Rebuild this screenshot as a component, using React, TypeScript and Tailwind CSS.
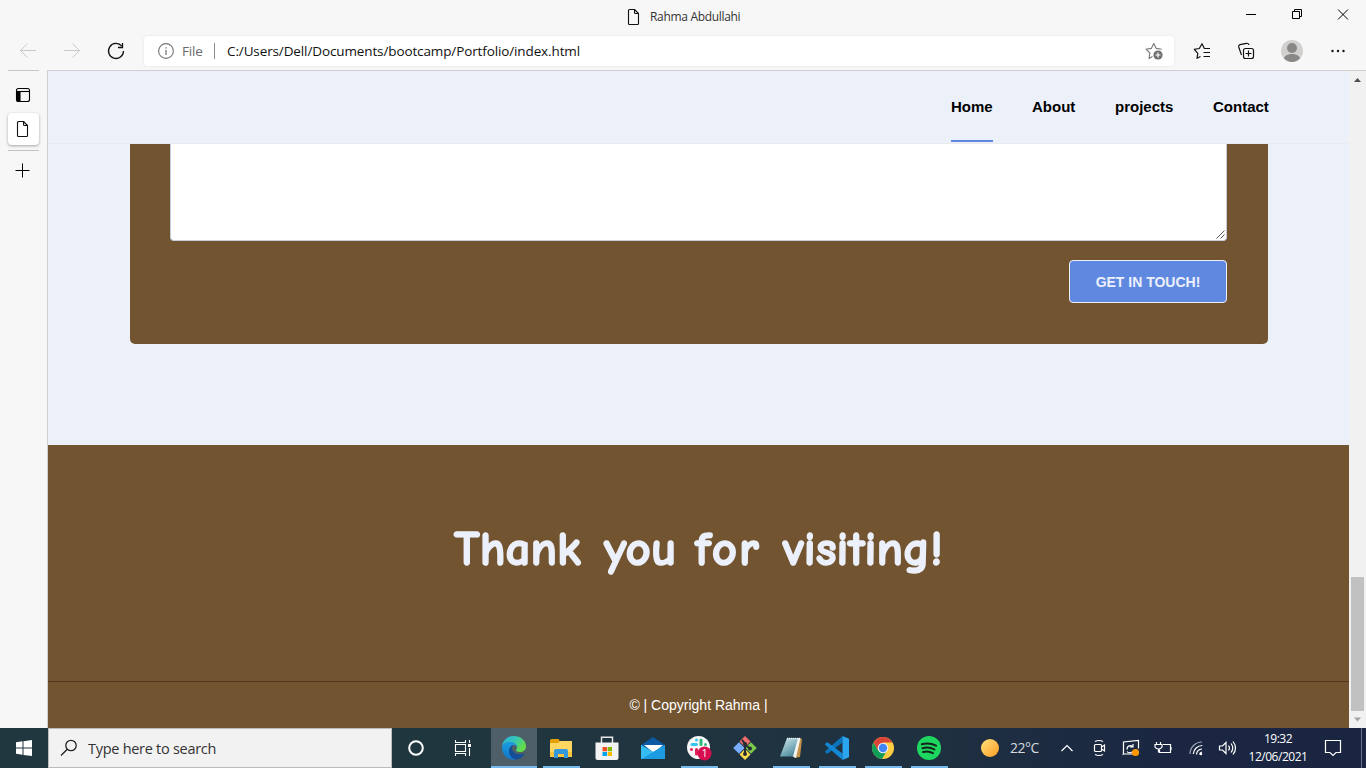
import React from "react";

const UI = "font-['Segoe_UI','Open_Sans',sans-serif]";

function FileIcon() {
  return (
    <svg width="14" height="18" viewBox="0 0 14 18" fill="none" stroke="#111" strokeWidth="1.1" strokeLinejoin="round">
      <path d="M2.5 1.5h5l4 4v10a1 1 0 0 1-1 1h-8a1 1 0 0 1-1-1v-13a1 1 0 0 1 1-1z" />
      <path d="M7.5 1.5v3a1 1 0 0 0 1 1h3" />
    </svg>
  );
}

function TitleBar() {
  return (
    <div className="flex h-[33px] items-center">
      <div className="w-[627px]" />
      <FileIcon />
      <span className={`${UI} ml-[9px] w-[94px] whitespace-nowrap text-[12px] tracking-[-0.320px] text-[#333]`}>Rahma Abdullahi</span>
      <div className="flex-1" />
      <svg width="122" height="33" viewBox="0 0 122 33" fill="none" stroke="#000" strokeWidth="1">
        <path d="M2 14.5h10" />
        <path d="M48.500 11.500h7v7h-7zM50.500 11.500v-2h7v7h-2" />
        <path d="M94 9.500l10 10M104 9.500l-10 10" />
      </svg>
    </div>
  );
}

function Toolbar() {
  return (
    <div className="flex h-[37px] items-start">
      <svg width="144" height="37" viewBox="0 0 144 37" fill="none" strokeWidth="1">
        <path d="M36 17.500H20.500M27.500 10.500l-7 7 7 7M64 17.500h15.500M72.500 10.500l7 7-7 7" stroke="#c9c9c9" />
        <path d="M121.800 13.200a7.500 7.500 0 1 0 1.700 4.800" stroke="#111" strokeWidth="1.300" />
        <path d="M118 14.500h4.500V10" stroke="#111" strokeWidth="1.300" />
      </svg>
      <div className={`${UI} mt-[3px] flex h-[30px] w-[1030px] items-center rounded-[4px] bg-white pl-[14px] text-[13px] shadow-[0_0_3px_rgba(0,0,0,0.08)]`}>
        <svg width="16" height="16" viewBox="0 0 16 16" fill="none" stroke="#777" strokeWidth="1.100">
          <circle cx="8" cy="8" r="7.400" />
          <path d="M8 7v5M8 4.200v1.400" strokeWidth="1.300" />
        </svg>
        <span className="ml-2 w-[24px] text-[13.500px] tracking-[-0.150px] text-[#6b6b6b]">File</span>
        <div className="ml-2 h-4 w-px bg-[#8a8a8a]" />
        <span className="ml-3 whitespace-nowrap text-[13.500px] tracking-[-0.120px] text-[#111]">C:/Users/Dell/Documents/bootcamp/Portfolio/index.html</span>
        <svg className="ml-auto mr-[10px]" width="20" height="20" viewBox="0 0 20 20" fill="none" stroke="#777" strokeWidth="1.100">
          <path d="M8.500 15.500L5 17.500l.9-5.500L2 8.200l5.300-.8L9.800 2.500l2.500 4.900 5.300.8" strokeLinejoin="round" />
          <circle cx="14" cy="14" r="4.600" fill="#6f6f6f" stroke="none" />
          <path d="M14 11.500v5M11.500 14h5" stroke="#fff" strokeWidth="1.200" />
        </svg>
      </div>
      <svg width="192" height="37" viewBox="1174 33 192 37" fill="none" stroke="#111" strokeWidth="1.200">
        <path d="M1200.500 56.500l-3.500 1.800.8-5-3.500-4 5-.8 2.700-4.700 2.400 4.700h5.600M1203.500 52.500h6.500M1203.500 56.500h6.500" strokeLinejoin="round" />
        <path d="M1241.500 55l-2.800-8a2 2 0 0 1 1.300-2.400l6.500-1.300a2 2 0 0 1 2.400 1.700" />
        <rect x="1243.500" y="48.500" width="10" height="10" rx="2" />
        <path d="M1248.500 50.500v6M1245.500 53.500h6" />
        <circle cx="1292" cy="51" r="11" fill="#d2d0ce" stroke="none" />
        <circle cx="1292" cy="48" r="5" fill="#8a8886" stroke="none" />
        <path d="M1284 58.500c1-6 15-6 16 0a11 11 0 0 1-16 0z" fill="#8a8886" stroke="none" />
        <g fill="#111" stroke="none">
          <circle cx="1332.500" cy="51" r="1.200" />
          <circle cx="1338" cy="51" r="1.200" />
          <circle cx="1343.500" cy="51" r="1.200" />
        </g>
      </svg>
    </div>
  );
}

function Sidebar() {
  return (
    <div className="flex w-[47px] flex-col items-center bg-[#f7f7f7]">
      <div className="h-px w-[31px] bg-[#c6c6c6]" />
      <svg className="mt-[16px] mr-[1px]" width="16" height="16" viewBox="0 0 16 16" fill="none" stroke="#000" strokeWidth="1.100">
        <rect x="1.500" y="1.500" width="13" height="13" rx="2" />
        <path d="M2 4.500h12" />
        <path d="M2 4.500h3v9.500H3a1 1 0 0 1-1-1z" fill="#000" />
      </svg>
      <div className="mt-[10px] flex h-8 w-[31px] items-center justify-center rounded-[4px] bg-white pr-px shadow-[0_1px_3px_rgba(0,0,0,0.35)]">
        <FileIcon />
      </div>
      <div className="mt-[5px] h-px w-[31px] bg-[#c2c2c2]" />
      <svg className="mt-[12px] mr-[2px]" width="15" height="15" viewBox="0 0 15 15" stroke="#000" strokeWidth="1">
        <path d="M7.500 0.500v14M0.500 7.500h14" />
      </svg>
    </div>
  );
}

function Nav() {
  return (
    <nav className="flex h-[73px] shrink-0 border-b border-[#e9ebee] pl-[903px] font-['Liberation_Sans',sans-serif] text-[15px] leading-[71px] font-bold text-black">
      <a className="h-[71px] w-[42px] whitespace-nowrap border-b-2 border-[#5f89e0]">Home</a>
      <a className="ml-[39px] w-[44px] whitespace-nowrap">About</a>
      <a className="ml-[39px] w-[58px] whitespace-nowrap">projects</a>
      <a className="ml-[40px] whitespace-nowrap">Contact</a>
    </nav>
  );
}

function Page() {
  return (
    <main className="flex w-[1301px] flex-col bg-[#ecf0f9]">
      <Nav />
      <section className="ml-[82px] h-[200px] w-[1138px] shrink-0 rounded-b-[5px] bg-[#725430] px-[40px]">
        <div className="flex h-[97px] w-[1057px] items-end justify-end rounded-b-[4px] border border-t-0 border-[#c3ccd8] bg-white">
          <svg width="11" height="11" viewBox="0 0 11 11" stroke="#444" strokeWidth="0.900">
            <path d="M1.500 9.500l8-8M5.500 9.500l4-4" />
          </svg>
        </div>
        <div className="mt-[19px] flex w-[1057px] justify-end">
          <button className="h-[43px] w-[158px] whitespace-nowrap rounded-[4px] border border-[#ecf0fa] bg-[#5f89e0] pt-[2px] font-['Liberation_Sans',sans-serif] text-[14px] font-bold text-[#ecf0fa]">GET IN TOUCH!</button>
        </div>
      </section>
      <footer className="mt-[101px] flex flex-1 flex-col bg-[#725430]">
        <h1 className="flex h-[236px] items-center pl-[406px] pb-[27px] font-['Comic_Sans_MS','Comic_Neue','Open_Sans',sans-serif] text-[49px] font-bold text-[#ecf0fa] [-webkit-text-stroke:1.500px_#ecf0fa] [stroke-linejoin:round]">
          <span className="w-[150px] whitespace-nowrap">Thank </span>
          <span className="w-[91px] whitespace-nowrap">you </span>
          <span className="w-[88px] whitespace-nowrap tracking-[2px]">for </span>
          <span className="whitespace-nowrap">visiting!</span>
        </h1>
        <p className="flex-1 border-t border-[#513a1e] text-center font-['Liberation_Sans',sans-serif] text-[14px] leading-[46px] text-white">© | Copyright Rahma |</p>
      </footer>
    </main>
  );
}

function Scrollbar() {
  return (
    <div className="flex w-[17px] flex-col items-center bg-[#f1f1f1]">
      <svg width="17" height="17" viewBox="0 0 17 17"><path d="M5 11h7L8.500 7z" fill="#505050" /></svg>
      <div className="mt-[489px] h-[134px] w-[13px] bg-[#c1c1c1]" />
      <svg width="17" height="17" viewBox="0 0 17 17"><path d="M5 6.500h7L8.500 10.500z" fill="#a3a3a3" /></svg>
    </div>
  );
}

function Cell({ children, open, active }: { children: React.ReactNode; open?: boolean; active?: boolean }) {
  return (
    <div className={`flex h-10 w-[46px] flex-col items-center ${active ? "bg-[#4e5f67]" : ""}`}>
      <div className={`flex h-[38px] items-center pt-[2px] ${active ? "" : "pl-[2px]"}`}>{children}</div>
      {open && <div className={`h-[2px] bg-[#76b9ed] ${active ? "w-[46px]" : "ml-[2px] w-[37px]"}`} />}
    </div>
  );
}

function Edge() {
  return (
    <svg width="24" height="24" viewBox="0 0 24 24">
      <defs>
        <linearGradient id="eg" x1="0" y1="0" x2="1" y2="0.500"><stop stopColor="#2aaee8" /><stop offset=".55" stopColor="#35c7b2" /><stop offset="1" stopColor="#66dc45" /></linearGradient>
        <linearGradient id="eb" x1="0" y1="0" x2="0" y2="1"><stop stopColor="#1b9de2" /><stop offset="1" stopColor="#1274cb" /></linearGradient>
      </defs>
      <path d="M0 11C.5 4 6 0 12 0c7 0 12 5 12 10 0 4-3 6-6 6s-4-1-4-2c0-.700 1-1 1-2.500C15 9 12 6 8 6 4 6 1 8 0 11z" fill="url(#eg)" />
      <path d="M0 11c1-3 4-5 8-5 4 0 7 2.500 7 5-1-1.500-2-2-3.500-2C9 9 7 12 7 15c0 4 3 7.500 7 8.800C6 25 0 19 0 11z" fill="url(#eb)" />
      <path d="M11 9c-2 1-4 3-4 6 0 4 3 8 7.500 8.500 3.500-.600 6.300-2.500 8-5.500.3-.500-.200-.900-.700-.600C17 20 10 17 10 12.500c0-1.500.500-2.500 1-3.500z" fill="#124f98" />
    </svg>
  );
}

function Explorer() {
  return (
    <svg width="22" height="19" viewBox="0 0 22 19">
      <path d="M0 1.500A1.500 1.500 0 0 1 1.500 0h7L10 2.500h12V5H0z" fill="#e3a008" />
      <path d="M0 4h8l2-2h12v16H0z" fill="#ffd65f" />
      <path d="M0 13h22v4.500H0z" fill="#f9c33c" />
      <path d="M4 19v-7a2 2 0 0 1 2-2h10a2 2 0 0 1 2 2v7h-4v-4H8v4z" fill="#3498dc" />
    </svg>
  );
}

function Store() {
  return (
    <svg width="24" height="24" viewBox="0 0 24 24">
      <path d="M6.500 8V1.200h11V8" fill="none" stroke="#e8e8e8" strokeWidth="1.500" />
      <path d="M.5 6.500h23V22a2 2 0 0 1-2 2h-19a2 2 0 0 1-2-2z" fill="#f3f3f3" />
      <path d="M7.500 11H12v4.300H7.500z" fill="#f25022" /><path d="M12.700 11h4.300v4.300h-4.300z" fill="#7fba00" />
      <path d="M7.500 16H12v4H7.500z" fill="#00a4ef" /><path d="M12.700 16h4.300v4h-4.300z" fill="#ffb900" />
    </svg>
  );
}

function Mail() {
  return (
    <svg width="24" height="24" viewBox="0 0 24 24">
      <path d="M0 9l12-8 12 8-12 7z" fill="#0c59a4" />
      <path d="M3 9h19l-9 8z" fill="#fff" />
      <path d="M0 9l12 7 12-7v14H0z" fill="#31b3ee" />
      <path d="M0 23l24-14v14z" fill="#1d9be0" />
      <path d="M0 9l12 7L0 23z" fill="#35bdf3" />
    </svg>
  );
}

function Slack() {
  return (
    <svg width="26" height="26" viewBox="0 0 26 26">
      <circle cx="12.500" cy="12.500" r="11.500" fill="#f8f8f8" />
      <g fill="none" strokeWidth="3" strokeLinecap="round">
        <path d="M10.500 5v0M6 9.500h4.500" stroke="#36c5f0" />
        <path d="M15 5v4.500M19.500 9.500v0" stroke="#2eb67d" />
        <path d="M5.500 14.500v0M10.500 14.500V19" stroke="#e01e5a" />
        <path d="M15 14.500h4" stroke="#ecb22e" />
      </g>
      <circle cx="18.500" cy="18.500" r="7" fill="#d70f50" />
      <text x="18.500" y="22" textAnchor="middle" fontFamily="Open Sans, sans-serif" fontSize="10" fill="#fff">1</text>
    </svg>
  );
}

function Git() {
  return (
    <svg width="24" height="24" viewBox="0 0 24 24">
      <path d="M12 0l5.500 5.500L12 11 6.500 5.500z" fill="#f26d6d" />
      <path d="M6 6.200l5.700 5.800L6 17.800.2 12z" fill="#79adff" />
      <path d="M12 13l5.500 5.500L12 24l-5.500-5.500z" fill="#ffdc4c" />
      <path d="M18 6.200l5.800 5.800-5.800 5.800-5.700-5.800z" fill="#7bc94a" />
      <path d="M9 4l3 3.500V19M12 9l5 3.500" fill="none" stroke="#252d32" strokeWidth="2" />
      <circle cx="12" cy="8" r="2" fill="#252d32" /><circle cx="12" cy="18" r="2" fill="#252d32" /><circle cx="17" cy="12.500" r="2" fill="#252d32" />
    </svg>
  );
}

function Notepad() {
  return (
    <svg width="24" height="24" viewBox="0 0 24 24">
      <defs><linearGradient id="np" x1="0" y1="0" x2="0.600" y2="1"><stop stopColor="#d5edf2" /><stop offset="1" stopColor="#4e8c9e" /></linearGradient></defs>
      <path d="M20 2l3 1-2 18-6 1z" fill="#c39248" />
      <path d="M17 2h4.500L17 22 13 20z" fill="#f4f4f0" />
      <path d="M8 2h11l-5 18.500H1z" fill="url(#np)" />
      <path d="M8 2.500h13" stroke="#e9eef0" strokeWidth="1.500" strokeDasharray="1 1" />
    </svg>
  );
}

function VSCode() {
  return (
    <svg width="24" height="24" viewBox="0 0 24 24">
      <path d="M17.500 0v6.500L2.800 17.500a1 1 0 0 1-1.300 0L.3 16.300a1 1 0 0 1 0-1.400z" fill="#0c73bb" />
      <path d="M.3 9.100a1 1 0 0 1 0-1.400l1.200-1.200a1 1 0 0 1 1.300 0l14.700 11V24z" fill="#1487d4" />
      <path d="M17.500 0L24 2.800v18.400L17.500 24z" fill="#2ba5ef" />
    </svg>
  );
}

function Chrome() {
  return (
    <svg width="24" height="24" viewBox="0 0 24 24">
      <circle cx="12" cy="12" r="11" fill="#ffcd41" />
      <path d="M12 12V6.500h9.500A11 11 0 0 0 2.500 6.500L7 14.500z" fill="#db4437" />
      <path d="M2.500 6.500A11 11 0 0 0 11 23l5-8.500H7z" fill="#109d58" />
      <circle cx="12" cy="12" r="5.300" fill="#f1f1f1" /><circle cx="12" cy="12" r="4.200" fill="#4285f4" />
    </svg>
  );
}

function Spotify() {
  return (
    <svg width="24" height="24" viewBox="0 0 24 24">
      <circle cx="12" cy="12" r="12" fill="#1ed760" />
      <path d="M4.800 8.200c5-1.400 10-.900 14.200 1.500M5.500 12.200c4.300-1.300 8.500-.700 12 1.300M6 16c3.500-1 7-.600 10 1.100" fill="none" stroke="#14231c" strokeWidth="2" strokeLinecap="round" />
    </svg>
  );
}

function Taskbar() {
  return (
    <div className={`${UI} flex h-10 bg-[linear-gradient(90deg,#20373f_0%,#20363f_40%,#1f3040_68%,#1b2742_85%,#1a2541_100%)]`}>
      <div className="flex w-12 items-center justify-center">
        <svg width="16" height="16" viewBox="0 0 16 16" fill="#fff"><path d="M0 2.200l6.500-.9v6.200H0zM7.500 1.200L16 0v7.500H7.500zM0 8.500h6.500v6.300L0 13.800zM7.500 8.500H16V16l-8.500-1.100z" /></svg>
      </div>
      <div className="flex w-[344px] items-center border border-[#b9bdbf] bg-[#f2f2f2] pl-[11px]">
        <svg width="18" height="18" viewBox="0 0 18 18" fill="none" stroke="#222" strokeWidth="1.300"><circle cx="11" cy="6.500" r="5.200" /><path d="M7.300 10.300L1 16.500" /></svg>
        <span className="ml-[10px] whitespace-nowrap pt-[2px] text-[14.500px] tracking-[-0.280px] text-[#333]">Type here to search</span>
      </div>
      <div className="flex w-[99px]">
        <div className="flex w-[48px] items-center justify-center"><svg width="18" height="18" viewBox="0 0 18 18"><circle cx="9" cy="9" r="6.800" fill="none" stroke="#fff" strokeWidth="2" /></svg></div>
        <div className="flex w-[49px] items-center justify-center pr-[3px]">
          <svg width="18" height="18" viewBox="0 0 18 18" fill="none" stroke="#fff" strokeWidth="1.100"><path d="M1.500 1v2.500h10V1M1.500 5.500h10v7h-10zM1.500 17v-2.500h10V17M15.500 1v3M15.500 9v8" /><path d="M14 5h3v3h-3z" fill="#fff" stroke="none" /></svg>
        </div>
      </div>
      <Cell open active><Edge /></Cell>
      <Cell open><Explorer /></Cell>
      <Cell><Store /></Cell>
      <Cell><Mail /></Cell>
      <Cell open><Slack /></Cell>
      <Cell><Git /></Cell>
      <Cell open><Notepad /></Cell>
      <Cell open><VSCode /></Cell>
      <Cell open><Chrome /></Cell>
      <Cell open><Spotify /></Cell>
      <div className="flex w-[59px] items-center justify-end pr-[11px]">
        <div className="h-[18px] w-[18px] rounded-full bg-linear-to-br from-[#ffe27a] to-[#ff9b0e]" />
      </div>
      <span className="w-[42px] whitespace-nowrap text-[14px] leading-[40px] tracking-[-0.500px] text-[#d5dade]">22°C</span>
      <svg width="192" height="40" viewBox="1052 728 192 40" fill="none" stroke="#fff" strokeWidth="1.200">
        <path d="M1061.500 751l5.500-5.500 5.500 5.500" />
        <rect x="1094.500" y="744.500" width="7" height="7" rx="1" /><path d="M1101.500 747l3-2v6l-3-2M1095 741.500q4-2 8 0M1095 754.500q4 2 8 0" />
        <path d="M1134 754h-10.500v-12l15-1.500v8M1123.500 754l-1 .5" /><path d="M1127 749.500c0-4 4-5 6-2.500m0-3v3h-3M1132 752c-2 1.500-4 1-5-.5" />
        <circle cx="1135.500" cy="752.500" r="3.600" fill="#ff9800" stroke="none" />
        <path d="M1163 744.500h7.500v8h-11v-3M1171 747v3M1156.500 742v3M1160.500 742v3M1155 744.500h7v2.500q-1 2-3.500 2t-3.500-2zM1158.500 749v3.500" />
        <g stroke="#9aa5b5"><path d="M1190 754a12 12 0 0 1 12-12" /><path d="M1193.300 754a9 9 0 0 1 9-8.500" stroke="#fff" /></g>
        <path d="M1196.500 754.500a6 6 0 0 1 5.500-5.500M1199.500 754.500a3 3 0 0 1 2.500-2.500" /><circle cx="1201" cy="754" r="1.200" fill="#fff" stroke="none" />
        <path d="M1219.500 746h3l3.500-3.500v11l-3.500-3.500h-3zM1228.500 745.500q2 2.500 0 5M1231 743.500q3.500 4.500 0 9M1233 741.500q5 6.500 0 13" />
      </svg>
      <div className="flex w-[68px] flex-col items-center whitespace-nowrap pt-[2px] text-[12px] leading-[18px] tracking-[-0.480px] text-white">
        <span>19:32</span><span>12/06/2021</span>
      </div>
      <div className="flex w-[49px] items-center justify-end pr-[19px]">
        <svg width="18" height="18" viewBox="0 0 18 18" fill="none" stroke="#fff" strokeWidth="1.200"><path d="M1.500 1.500h15v12h-4.500l-3 3-3-3H1.500z" /></svg>
      </div>
      <div className="h-10 w-px bg-[#66718a]" />
    </div>
  );
}

export default function App() {
  return (
    <div className="flex h-[768px] w-[1366px] flex-col overflow-hidden bg-[#f7f7f7]">
      <TitleBar />
      <Toolbar />
      <div className="flex h-[658px]">
        <Sidebar />
        <div className="flex h-[658px] w-[1319px] border-t border-l border-[#cfcfcf]">
          <Page />
          <Scrollbar />
        </div>
      </div>
      <Taskbar />
    </div>
  );
}
